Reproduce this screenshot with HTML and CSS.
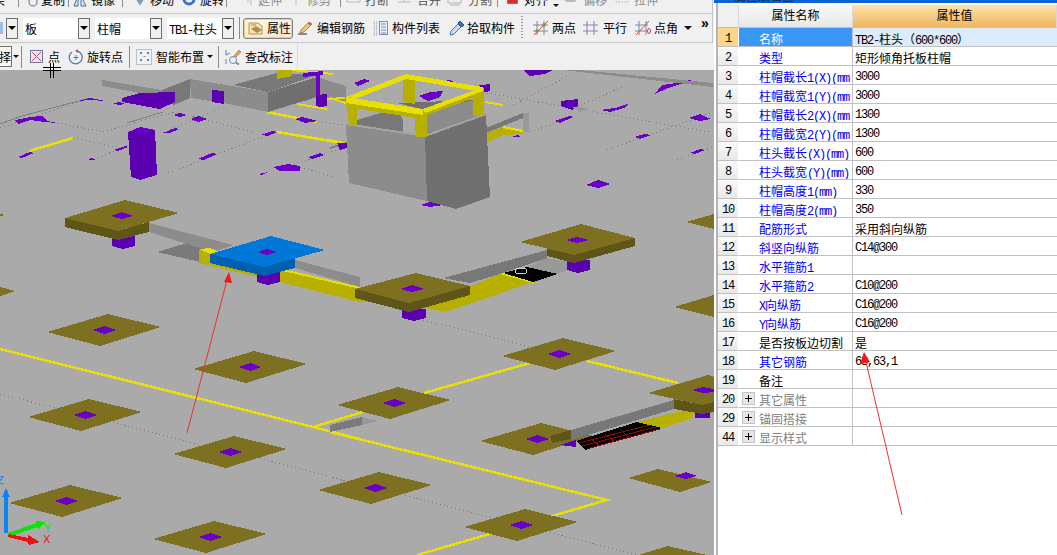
FILE: index.html
```html
<!DOCTYPE html>
<html lang="zh-CN">
<head>
<meta charset="utf-8">
<title>属性编辑器</title>
<link rel="stylesheet" href="styles.css">
</head>
<body>
<div class="app">
  <div class="work">
    <div class="bar bar1">
      <span class="lead">某</span><i class="sep"></i>
      <svg class="ic" viewBox="0 0 16 16"><circle cx="5" cy="11" r="4" fill="none" stroke="#8a98a8" stroke-width="1.5"/></svg><span>复制</span><i class="sep"></i>
      <svg class="ic" viewBox="0 0 16 16"><path d="M1 15 5 5v10zM8 15V5l5 10z" fill="#dfe8f2" stroke="#4a6a9a"/></svg><span>镜像</span><i class="sep"></i>
      <svg class="ic" viewBox="0 0 16 16"><path d="M5 9h2V2h2v7h2l-3 5z" fill="#8aa0c0" stroke="#5a7090" stroke-width=".5"/></svg><span>移动</span>
      <svg class="ic" viewBox="0 0 16 16"><circle cx="7" cy="8" r="5" fill="none" stroke="#3f73c8" stroke-width="3"/></svg><span>旋转</span><i class="sep"></i>
      <svg class="ic" viewBox="0 0 16 16"><path d="M1 8h9M10 4v8M13 3v11" fill="none" stroke="#b8b8b8"/></svg><span class="off">延伸</span>
      <svg class="ic" viewBox="0 0 16 16"><path d="M1 8h11M6 3v11" fill="none" stroke="#b8b8b8"/></svg><span class="off">修剪</span><i class="sep"></i>
      <svg class="ic" viewBox="0 0 16 16"><path d="M1 6h13M1 11h13M1 6v5M14 6v5" fill="none" stroke="#b8b8b8"/></svg><span class="dim">打断</span>
      <svg class="ic" viewBox="0 0 16 16"><path d="M1 6h13M1 11h13M7 6v5" fill="none" stroke="#b8b8b8"/></svg><span class="dim">合并</span>
      <svg class="ic" viewBox="0 0 16 16"><path d="M1 4h13v8H1zM3 14h10" fill="none" stroke="#b0b0b0"/></svg><span class="dim">分割</span><i class="sep"></i>
      <svg class="ic" viewBox="0 0 16 16"><path d="M1 2h9v10H1z" fill="#fff" stroke="#2850a0" stroke-width="1.5"/><path d="M1 8h9v4H1z" fill="#d03030"/></svg><span>对齐</span><b class="caret"></b>
      <svg class="ic" viewBox="0 0 16 16"><rect x="2" y="2" width="11" height="8" rx="3" fill="#eee" stroke="#b8b8b8" stroke-width="2"/></svg><span class="off">偏移</span>
      <svg class="ic" viewBox="0 0 16 16"><path d="M1 2h9l3 3v6H1z" fill="none" stroke="#b8b8b8" stroke-dasharray="2 1"/></svg><span class="off">拉伸</span>
    </div>

    <div class="bar bar2">
      <span class="stub"></span>
      <span class="drop"><b class="tri"></b></span>
      <span class="combo"><span class="field">板</span><span class="drop"><b class="tri"></b></span></span>
      <span class="combo"><span class="field">柱帽</span><span class="drop"><b class="tri"></b></span></span>
      <span class="combo"><span class="field"><span class="la">TB1-</span>柱头</span><span class="drop"><b class="tri"></b></span></span>
      <i class="sep"></i>
      <span class="pressed">
        <svg class="ic" viewBox="0 0 16 16"><path d="M1 3h9l4 3v8H1z" fill="#fbe2a8" stroke="#b09060"/><path d="M3 9l5-3 6 4-5 3z" fill="#a89058"/><path d="M3 5h5" stroke="#d88030"/></svg><span>属性</span>
      </span>
      <svg class="ic" viewBox="0 0 16 16"><path d="M1 14h9" stroke="#222"/><path d="M4 10 12 2l3 2-8 8-4 1z" fill="#e8c878" stroke="#806030" stroke-width=".7"/><path d="M12 2l3 2-1.500 1.500-3-2z" fill="#d86040"/></svg><span>编辑钢筋</span>
      <svg class="ic" viewBox="0 0 16 16"><path d="M1 2h3v3H1zM1 7h3v3H1zM1 12h3v3H1z" fill="none" stroke="#9aa0a8" stroke-dasharray="1 1"/><rect x="6.500" y="1.500" width="8" height="13" fill="#e8f0fa" stroke="#7c90b0"/><path d="M8 4h5M8 7h5M8 10h5M8 13h5" stroke="#7c90b0"/></svg><span>构件列表</span>
      <svg class="ic" viewBox="0 0 16 16"><path d="M1 15l1-4 7-7 3 3-7 7z" fill="#c8dcf4" stroke="#4a78c0"/><path d="M9 3l2-2 4 4-2 2z" fill="#3f6fb8" stroke="#2a5090"/></svg><span>拾取构件</span>
      <i class="grip"></i>
      <svg class="ic" viewBox="0 0 16 16"><path d="M4 1v14M11 1v14M0 5h15M0 11h15" stroke="#7c86ac" fill="none"/><path d="M1 15 15 1" stroke="#d84040"/><circle cx="4" cy="11" r="1.800" fill="#70a040"/><circle cx="11" cy="5" r="1.800" fill="#70a040"/></svg><span>两点</span>
      <svg class="ic" viewBox="0 0 16 16"><path d="M4 1v14M11 1v14M0 5h15M0 11h15" stroke="#7c86ac" fill="none"/></svg><span>平行</span>
      <svg class="ic" viewBox="0 0 16 16"><path d="M4 1v14M11 1v14M0 5h13M0 11h13" stroke="#7c86ac" fill="none"/><path d="M1 15 14 1" stroke="#d84040"/><ellipse cx="14" cy="11" rx="1.500" ry="2.500" fill="none" stroke="#d84040"/></svg><span>点角</span>
      <b class="caret wide"></b>
      <span class="more">»</span>
    </div>

    <div class="bar bar3">
      <span class="pick">择</span><b class="caret"></b><i class="sep"></i>
      <svg class="ic small" viewBox="0 0 13 13"><rect x=".5" y=".5" width="12" height="12" fill="#e6eaf4" stroke="#6c78a0"/><path d="M2 2l9 9M11 2l-9 9" stroke="#d04a60"/></svg><span>点</span>
      <svg class="ic" viewBox="0 0 16 16"><path d="M4 3a6.500 6.500 0 1 0 5-1" fill="none" stroke="#5078b8" stroke-width="1.300"/><path d="M10 0v4l-3-2z" fill="#d05050"/><path d="M8 6v5M5.500 8.500h5" stroke="#5078b8"/></svg><span>旋转点</span><i class="sep"></i>
      <svg class="ic" viewBox="0 0 16 16"><rect x=".5" y=".5" width="15" height="15" fill="#eef2f8" stroke="#8a8f9a" stroke-dasharray="1 1"/><path d="M4 4h2M5 3v2M11 4h2M12 3v2M4 11h2M5 10v2M11 11h2M12 10v2" stroke="#2060b0"/><path d="M7.500 7.500h2" stroke="#c08020"/></svg><span>智能布置</span><b class="caret"></b><i class="sep"></i>
      <svg class="ic" viewBox="0 0 16 16"><path d="M1 1v5M1 6l4-2M1 15v-5" stroke="#5a80b8" fill="none"/><path d="M8 8 14 1l2 2-6 6z" fill="#e8a060" stroke="#a06030" stroke-width=".6"/><circle cx="8" cy="11" r="3.500" fill="#e8f2fc" stroke="#7a8a9a"/><path d="M11 13.500l3 2" stroke="#7a8a9a" stroke-width="2"/></svg><span>查改标注</span>
    </div>

    <svg class="scene" viewBox="0 70 714 485" aria-hidden="true">
      <defs>
        <g id="plate"><polygon class="ol" points="-57,2 4,-16 57,-3 -4,16"/><polygon class="pu" points="-12,0 -3,-3 0,-4 3,-3 12,0 3,3 0,4 -3,3"/></g>
      </defs>

      <g class="dots">
        <path d="M0 128 90 98M57 123 103 132M73 138 117 147M98 158 128 145M103 132 173 112M163 133 222 107M173 112 267 135M168 173 267 135M317 122 343 125M300 167 333 177M297 163 347 147"/>
        <path d="M513 105 570 75M577 107 627 85M607 150 713 112M530 132 573 117M487 93 710 132M677 160 713 147"/>
        <path d="M0 394 55 408M113 422 200 445M260 458 345 481M423 320 530 347M332 477 350 482M405 495 493 518M550 532 637 555"/>
      </g>
      <path class="gl" d="M0 124 22 116 90 98M127 123 163 112"/>

      <g class="ye">
        <path d="M29 151 73 138M277 132 343 143M267 112 317 122M0 349 313 427 360 439"/>
        <path d="M313 427 363 412M424 393 530 363M587 361 678 383M330 432 607 500 490 534 417 555"/>
      </g>

      <g class="pu">
        <polygon points="15,120 30,117 42,116 47,121 57,123 44,122 30,120 18,124"/>
        <polygon points="78,101 90,98 105,101 90,100"/>
        <polygon points="113,103 120,102 125,104 118,105"/>
        <polygon points="173,115 180,113 186,115 180,117"/>
        <polygon points="191,119 198,116 207,119 198,122"/>
        <polygon points="163,133 175,128 179,129 170,133"/>
        <polygon points="113,150 125,146 128,147 118,151"/>
        <polygon points="198,159 212,153 217,154 204,160"/>
        <polygon points="18,157 30,152 34,153 22,158"/>
        <polygon points="88,159 92,158 96,160 90,160"/>
        <polygon points="261,135 272,131 277,132 268,136"/>
        <polygon points="295,119 302,117 318,121 305,123"/>
        <polygon points="308,157 320,153 324,155 312,159"/>
        <polygon points="273,167 288,164 300,166 300,171 280,171"/>
        <polygon points="337,147 345,143 347,148"/>
        <polygon points="258,174 268,172 262,175"/>
        <polygon points="275,86 283,83 285,84 278,87"/>
        <polygon points="354,83 364,79 370,81 358,86"/>
        <polygon points="330,94 336,92 338,95 332,96"/>
        <polygon points="444,81 450,80 454,82 448,82"/>
        <polygon points="600,110 615,108 628,104 624,108 610,112"/>
        <polygon points="554,121 570,116 573,117 560,123"/>
        <polygon points="655,94 662,85 670,84 690,80 700,84 680,84 668,88"/>
        <polygon points="689,118 700,114 704,116 711,119 700,121"/>
        <polygon points="634,137 645,134 651,135 640,139"/>
        <polygon points="690,153 700,149 705,150 695,154"/>
        <polygon points="586,185 598,180 611,184 598,188"/>
        <polygon points="420,205 432,201 443,205 430,207"/>
        <polygon points="511,137 518,135 521,137"/>
      </g>

      <polygon class="g2" points="102,80 102,86 162,97 162,90"/>
      <polygon class="g3" points="162,90 190,79 190,98 174,105 162,97"/>
      <polygon class="g2" points="190,79 268,92 268,112 223,103 191,98"/>
      <polygon class="g4" points="268,92 317,77 317,97 268,112"/>
      <polygon class="g3" points="233,85 277,73 317,75 268,92"/>
      <polygon class="g2" points="317,77 346,86 346,102 317,97"/>
      <polygon class="pd" points="122,98 140,93 175,92 175,102 160,109 122,102"/>
      <polygon class="pd" points="212,90 224,91 224,104 212,102"/>
      <polygon class="pd" points="316,95 327,94 327,106 316,108"/>
      <polygon class="pd" points="128,132 155,130 157,175 140,180 131,177"/>
      <polygon class="pu" points="128,132 140,127 155,130 145,134"/>
      <path class="yl" d="M277 72 292 70 333 74M297 104 327 109M327 99 345 98"/>
      <polygon class="ys" points="277,70 292,70 292,76 277,79"/>
      <path class="pl" d="M318 73V95M303 75 323 73"/>
      <polygon class="pd" points="561,101 578,99 578,106 572,110 561,106"/>
      <polygon class="g1" points="572,107 590,108 580,112"/>
      <polygon class="pd" points="523,70 553,70 545,74 530,76"/>

      <polygon class="g2" points="563,70 580,70 713,83 713,87"/>
      <polygon class="g3" points="486,128 523,113 523,118 486,133"/>
      <polygon class="g1" points="523,113 529,113 529,132 523,132"/>
      <polygon class="ys" points="487,133 503,127 523,131 523,134 503,135 487,143"/>
      <path class="yl" d="M485 102 503 105M503 127 523 131M330 98 346 103M330 140 347 144"/>
      <path class="gl2" d="M330 148 347 143"/>
      <polygon class="pd" points="337,143 347,143 347,148 340,150"/>

      <polygon class="g3" points="357,120 397,108 403,120 403,140 357,130"/>
      <polygon class="g2" points="414,112 475,100 483,115 425,137"/>
      <polygon class="g4" points="397,103 475,100 425,110"/>
      <polygon class="pu" points="419,96 430,92 443,91 440,97 428,101"/>
      <polygon class="pd" points="475,86 490,84 490,91 482,93"/>
      <polygon class="g2" points="346,125 425,137 427,201 349,183"/>
      <polygon class="g4" points="425,137 486,115 490,197 456,209 427,201"/>
      <path class="rim" d="M346 124 425 136 486 114"/>

      <polygon class="ys" points="403,77 415,76 415,104 403,102"/>
      <polygon class="ys" points="473,90 484,88 484,115 473,116"/>
      <polygon class="ys" points="346,98 357,99 357,125 349,125"/>
      <polygon class="ys" points="414,112 427,110 427,137 416,137"/>
      <polygon class="yt" points="406,74 483,87 483,92 406,79"/>
      <polygon class="ys" points="423,110 484,88 484,94 425,116"/>
      <polygon class="yt" points="346,97 406,74 406,79 358,98"/>
      <polygon class="ys" points="346,102 423,114 425,119 416,118 346,107"/>
      <polygon class="yt" points="346,97 423,109 423,115 346,103"/>
      <polygon class="yt" points="423,109 483,87 483,91 425,113"/>

      <polygon class="hole" points="157,252 190,242 213,250 200,262"/>
      <polygon class="g2" points="149,223 233,245 213,252 149,232"/>
      <polygon class="g2" points="295,260 360,277 360,287 295,268"/>
      <polygon class="ys" points="199,250 257,266 257,277 199,263"/>
      <polygon class="yt" points="199,249 210,248 220,252 210,254"/>
      <polygon class="ys" points="280,270 360,288 400,300 360,302 280,282"/>
      <polygon class="yt" points="283,269 360,287 360,289 283,271"/>

      <polygon class="g3" points="443,278 547,250 547,258 500,274 470,283"/>
      <polygon class="g1l" points="527,267 547,258 567,262 567,270 558,274"/>
      <polygon class="ys" points="420,307 500,274 533,282 446,312"/>
      <polygon class="yt" points="500,274 503,273 536,282 533,283"/>
      <polygon class="bk" points="503,273 527,267 558,274 533,282"/>
      <ellipse class="ring" cx="521" cy="271" rx="6" ry="3"/>

      <polygon class="pd" points="112,236 135,236 135,246 123,249 112,246"/>
      <polygon class="pd" points="257,272 280,272 280,282 268,285 257,282"/>
      <polygon class="pd" points="402,309 426,309 426,318 414,321 402,318"/>
      <polygon class="pd" points="567,260 590,260 590,270 578,273 567,270"/>

      <polygon class="os" points="65,218 118,231 149,222 149,232 118,240 65,227"/>
      <polygon class="ol" points="65,218 125,200 179,213 118,231"/>
      <polygon class="pu" points="111,216 122,212 133,216 122,219"/>
      <polygon class="bs" points="210,254 264,267 295,258 295,268 264,276 210,263"/>
      <polygon class="bt" points="210,254 271,236 325,250 264,267"/>
      <polygon class="pu" points="257,252 267,249 277,252 267,255"/>
      <polygon class="os" points="355,289 409,303 470,286 470,295 409,312 355,298"/>
      <polygon class="ol" points="355,289 416,273 470,286 409,303"/>
      <polygon class="pu" points="401,289 412,285 424,289 412,292"/>
      <polygon class="os" points="547,248 574,255 635,238 635,246 574,263 547,256"/>
      <polygon class="ol" points="520,242 581,224 635,238 574,255"/>
      <polygon class="pu" points="566,240 577,237 589,240 577,243"/>

      <use href="#plate" x="104" y="330"/>
      <use href="#plate" x="250" y="367"/>
      <use href="#plate" x="85" y="415"/>
      <use href="#plate" x="230" y="452"/>
      <use href="#plate" x="66" y="501"/>
      <use href="#plate" x="210" y="537"/>
      <use href="#plate" x="521" y="525"/>
      <use href="#plate" x="559" y="354"/>
      <use href="#plate" x="394" y="403"/>
      <use href="#plate" x="375" y="488"/>
      <use href="#plate" x="537" y="439"/>
      <polygon class="ol" points="628,478 658,469 712,482 680,492"/>
      <polygon class="pu" points="674,476 686,472 697,476 686,479"/>
      <polygon class="ol" points="638,555 668,546 707,555"/>
      <polygon class="ol" points="0,214 5,215 0,216"/>
      <polygon class="ol" points="0,287 15,291 0,296"/>
      <polygon class="ol" points="686,222 714,214 714,229"/>
      <polygon class="ol" points="674,307 714,295 714,317"/>
      <polygon class="hole" points="330,425 362,417 362,425 330,432"/>
      <polygon class="g1" points="362,417 378,421 362,425"/>

      <polygon class="g3" points="571,430 674,400 674,409 571,440"/>
      <polygon class="os" points="550,436 571,430 571,439 552,443"/>
      <polygon class="pd" points="560,445 576,440 576,447"/>
      <polygon class="ys" points="638,422 673,413 693,410 693,418 662,428"/>
      <polygon class="bk" points="576,441 637,422 662,428 585,450"/>
      <path class="grid" d="M579 443 650 425M582 446 656 427M590 448 660 429M590 438 600 446M605 434 615 442M620 429 628 437"/>
      <polygon class="pd" points="695,412 710,410 710,418 695,418"/>
      <polygon class="os" points="674,399 702,405 714,402 714,412 702,414 674,409"/>
      <polygon class="ol" points="648,393 708,375 714,377 714,402 702,405"/>
      <polygon class="pu" points="692,390 703,387 714,389 714,392 703,393"/>

      <g class="gizmo">
        <polygon class="ax-b" points="4,533 4,497 2,497 6,488 10,497 8,497 8,533"/>
        <polygon class="ax-g" points="8,533 36,523 36,521 45,522 38,529 37,527 9,537"/>
        <polygon class="ax-r" points="9,534 28,538 28,535 40,542 29,545 28,542 8,537"/>
        <text class="lbl-b" x="-3" y="484">Z</text>
        <text class="lbl-g" x="44" y="532">Y</text>
        <text class="lbl-r" x="43" y="543">X</text>
      </g>
    </svg>
  </div>

  <aside class="panel">
    <div class="title"><span class="title-text">属性编辑器</span></div>
    <table class="props">
      <colgroup><col class="c-no"><col class="c-name"><col class="c-val"></colgroup>
      <thead><tr><th class="h-no"></th><th class="h-name">属性名称</th><th class="h-val">属性值</th></tr></thead>
      <tbody>
        <tr class="sel"><td class="no">1</td><td class="name">名称</td><td class="val"><span class="la">TB2-</span>柱头（<span class="la">600*600</span>）</td></tr>
        <tr><td class="no">2</td><td class="name bl">类型</td><td class="val">矩形倾角托板柱帽</td></tr>
        <tr><td class="no">3</td><td class="name bl">柱帽截长<span class="la">1(X)(mm</span></td><td class="val la">3000</td></tr>
        <tr><td class="no">4</td><td class="name bl">柱帽截宽<span class="la">1(Y)(mm</span></td><td class="val la">3000</td></tr>
        <tr><td class="no">5</td><td class="name bl">柱帽截长<span class="la">2(X)(mm</span></td><td class="val la">1300</td></tr>
        <tr><td class="no">6</td><td class="name bl">柱帽截宽<span class="la">2(Y)(mm</span></td><td class="val la">1300</td></tr>
        <tr><td class="no">7</td><td class="name bl">柱头截长<span class="la">(X)(mm)</span></td><td class="val la">600</td></tr>
        <tr><td class="no">8</td><td class="name bl">柱头截宽<span class="la">(Y)(mm)</span></td><td class="val la">600</td></tr>
        <tr><td class="no">9</td><td class="name bl">柱帽高度<span class="la">1(mm)</span></td><td class="val la">330</td></tr>
        <tr><td class="no">10</td><td class="name bl">柱帽高度<span class="la">2(mm)</span></td><td class="val la">350</td></tr>
        <tr><td class="no">11</td><td class="name bl">配筋形式</td><td class="val">采用斜向纵筋</td></tr>
        <tr><td class="no">12</td><td class="name bl">斜竖向纵筋</td><td class="val la">C14@300</td></tr>
        <tr><td class="no">13</td><td class="name bl">水平箍筋<span class="la">1</span></td><td class="val"></td></tr>
        <tr><td class="no">14</td><td class="name bl">水平箍筋<span class="la">2</span></td><td class="val la">C10@200</td></tr>
        <tr><td class="no">15</td><td class="name bl"><span class="la">X</span>向纵筋</td><td class="val la">C16@200</td></tr>
        <tr><td class="no">16</td><td class="name bl"><span class="la">Y</span>向纵筋</td><td class="val la">C16@200</td></tr>
        <tr><td class="no">17</td><td class="name">是否按板边切割</td><td class="val">是</td></tr>
        <tr><td class="no">18</td><td class="name bl">其它钢筋</td><td class="val la">63,63,1</td></tr>
        <tr><td class="no">19</td><td class="name">备注</td><td class="val"></td></tr>
        <tr><td class="no">20</td><td class="group"><b class="plus"></b>其它属性</td><td class="val"></td></tr>
        <tr><td class="no">29</td><td class="group"><b class="plus"></b>锚固搭接</td><td class="val"></td></tr>
        <tr><td class="no">44</td><td class="group"><b class="plus"></b>显示样式</td><td class="val"></td></tr>
      </tbody>
    </table>
  </aside>

  <svg class="marks" viewBox="0 0 1057 555" aria-hidden="true">
    <path class="arrow" d="M187 433 227 280M902 515 866 362"/>
    <polygon class="head" points="229,272 232,283 224,282"/>
    <polygon class="head" points="864,352 870,362 860,364"/>
    <path class="cross" d="M50.500 63V78M53.500 63V78M43 67.500H61M43 70.500H61"/>
  </svg>
</div>
</body>
</html>
```
FILE: styles.css
```css
* { box-sizing: border-box; }
html, body { margin: 0; height: 100%; }
body {
  overflow: hidden;
  background: #fff;
  color: #000;
  font: 12px/14px "Noto Sans CJK SC", "Liberation Sans", sans-serif;
}
.app {
  position: relative;
  display: grid;
  grid-template-columns: 714px 343px;
  width: 1057px;
  height: 555px;
  overflow: hidden;
}
.work {
  display: flex;
  flex-direction: column;
  height: 555px;
  background: #f0f0f0;
}

/* toolbars */
.bar { display: grid; white-space: nowrap; }
.bar span { min-width: 0; }
.bar1 {
  height: 14px;
  width: 713px;
  padding-bottom: 7px;
  overflow: hidden;
  border-bottom: 1px solid #c8c8c8;
  border-right: 1px solid #c8c8c8;
  grid-template-rows: 7px;
  align-items: end;
  grid-template-columns: 18px 10px 13px 27px 5px 18px 31px 10px 18px 32px 18px 26px 12px 20px 32px 17px 33px 6px 19px 32px 20px 30px 21px 29px 10px 17px 28px 11px 20px 32px 19px 1fr;
}
.bar2 {
  height: 29px;
  width: 713px;
  border-bottom: 1px solid #c8c8c8;
  border-right: 1px solid #c8c8c8;
  align-items: center;
  grid-template-columns: 6px 17px 72px 72px 72px 4px 54px 20px 56px 19px 57px 18px 54px 12px 19px 31px 20px 32px 19px 29px 18px 1fr;
}
.bar3 {
  height: 27px;
  width: 298px;
  border-right: 1px solid #dcdcdc;
  align-items: center;
  grid-template-columns: 12px 9px 9px 18px 20px 19px 42px 7px 20px 50px 12px 7px 20px 1fr;
}
.ic { display: block; width: 16px; height: 16px; }
.ic.small { width: 13px; height: 13px; }
.sep { display: block; width: 1px; height: 22px; background: #8c8c8c; }
.bar1 .sep { height: 18px; }
.lead { display: block; margin-left: -7px; }
.off { color: #8c8c8c; }
.dim { color: #555; }
.caret {
  display: block;
  width: 0;
  height: 0;
  border: 3px solid transparent;
  border-top: 3px solid #111;
  border-bottom: 0;
  margin-left: 1px;
}
.caret.wide { border-width: 4px 4px 0; }
.stub { display: block; width: 3px; height: 12px; background: #9cc0ec; }
.drop {
  display: flex;
  align-items: center;
  justify-content: center;
  width: 12px;
  height: 21px;
  background: #f0f0f0;
  border: 1px solid #707070;
}
.tri {
  display: block;
  width: 0;
  height: 0;
  border: 4px solid transparent;
  border-top: 4px solid #000;
  border-bottom: 0;
}
.combo { display: flex; width: 67px; height: 21px; }
.field {
  display: block;
  flex: 1;
  background: #fff;
  padding-left: 2px;
  line-height: 21px;
  overflow: hidden;
}
.pressed {
  display: flex;
  align-items: center;
  gap: 3px;
  width: 50px;
  height: 21px;
  padding-left: 4px;
  border: 1px solid #808080;
  border-radius: 3px;
  background: linear-gradient(#fff8ec, #fde8c8);
  box-shadow: inset 0 0 0 1px #f8c890;
}
.grip {
  display: block;
  width: 2px;
  height: 24px;
  background: repeating-linear-gradient(#9a9a9a 0 1px, transparent 1px 3px);
}
.more { font: bold 14px/14px "Liberation Sans", sans-serif; align-self: start; margin-top: 2px; }
.pick {
  display: block;
  width: 12px;
  height: 21px;
  overflow: hidden;
  border: 1px solid #707070;
  border-left: 0;
  background: #f8f8f8;
  line-height: 19px;
  direction: rtl;
}
.la {
  font-family: "Liberation Mono", monospace;
  letter-spacing: -1.2px;
}

/* 3D scene */
.scene { display: block; width: 714px; height: 485px; background: #aaa; shape-rendering: crispEdges; }
.dots path { fill: none; stroke: #7c7c7c; stroke-dasharray: 1 3; }
.gl { fill: none; stroke: #808080; }
.gl2 { fill: none; stroke: #808080; stroke-width: 2; }
.ye path { fill: none; stroke: #e8e000; stroke-width: 2.5; }
.yl { fill: none; stroke: #e8e000; stroke-width: 2; }
.pl { fill: none; stroke: #6a00c8; stroke-width: 4; }
.pu { fill: #6a00c8; }
.pd { fill: #5a00b0; }
.ol { fill: #7d7020; }
.os { fill: #5f5517; }
.g1 { fill: #999; }
.g1l { fill: #999; }
.g2 { fill: #8c8c8c; }
.g3 { fill: #787878; }
.g4 { fill: #707070; }
.hole { fill: #7a7a7a; }
.rim { fill: none; stroke: #a4a4a4; stroke-width: 2; }
.ys { fill: #b8b000; }
.yt { fill: #e8e000; }
.bk { fill: #000; }
.ring { fill: none; stroke: #d0d0d0; }
.grid { fill: none; stroke: #8a0a0a; }
.bt { fill: #0078d8; }
.bs { fill: #0060b0; }
.ax-b { fill: #0a84f0; }
.ax-g { fill: #10e010; }
.ax-r { fill: #f01010; }
.gizmo text { font: 11px "Liberation Sans", sans-serif; }
.lbl-b { fill: #0a84f0; }
.lbl-g { fill: #10e010; }
.lbl-r { fill: #f01010; }

/* property panel */
.panel {
  position: relative;
  padding-left: 4px;
  background: #fff;
}
.panel::before {
  content: "";
  position: absolute;
  top: 3px;
  bottom: 0;
  left: 2px;
  width: 2px;
  background: #b4b4bc;
}
.title {
  display: flex;
  align-items: flex-end;
  height: 3px;
  margin-left: -4px;
  padding-left: 20px;
  overflow: hidden;
  background: #0a62d8;
  color: #222;
}
.title-text { display: block; height: 14px; flex: none; }
.props {
  width: 339px;
  margin-top: 2px;
  table-layout: fixed;
  border-collapse: separate;
  border-spacing: 0;
}
.c-no { width: 21px; }
.c-name { width: 114px; }
.c-val { width: 204px; }
.props th {
  height: 23px;
  padding: 3px 0 0;
  font-weight: 400;
  font-size: 12px;
  line-height: 14px;
  vertical-align: top;
  border-right: 1px solid #d8d8d8;
  border-bottom: 1px solid #c0c0c0;
}
.h-no { background: #f0f0f0; }
.h-name { background: linear-gradient(#f8f8f8, #e8e8e8); }
.h-val { background: linear-gradient(#fde2ad, #efb75e); }
.props td {
  height: 19px;
  padding: 6px 0 0;
  line-height: 10px;
  vertical-align: top;
  white-space: nowrap;
  overflow: hidden;
  border-bottom: 1px solid #c0c0c0;
}
.props td.no {
  text-align: center;
  font-family: "Liberation Mono", monospace;
  letter-spacing: -1.2px;
  background: linear-gradient(#fafafa, #e8e8e8);
  border-right: 1px solid #fff;
}
.props td.name, .props td.group { border-right: 1px solid #c0c0c0; }
.props td.name { padding-left: 20px; }
.props td.group { color: #808080; padding-left: 3px; }
.props td.val { padding-left: 2px; }
.props td.bl { color: #0000f0; }
.props .sel td.no { background: #fcd68a; }
.props .sel td.name { background: #3a97f5; color: #fff; }
.props .sel td.val { background: #dcecfc; }
.plus {
  display: inline-block;
  position: relative;
  width: 13px;
  height: 13px;
  margin: -3px 4px -3px 0;
  vertical-align: top;
  background: #e4e6ee;
  border: 1px solid #c4c4c4;
}
.plus::before, .plus::after { content: ""; position: absolute; background: #000; }
.plus::before { left: 2px; right: 2px; top: 5px; height: 1px; }
.plus::after { top: 2px; bottom: 2px; left: 5px; width: 1px; }

/* annotations drawn over everything */
.marks { position: absolute; top: 0; left: 0; width: 1057px; height: 555px; pointer-events: none; }
.arrow { fill: none; stroke: #f03030; }
.head { fill: #f01818; }
.cross { fill: none; stroke: #000; shape-rendering: crispEdges; }
```
